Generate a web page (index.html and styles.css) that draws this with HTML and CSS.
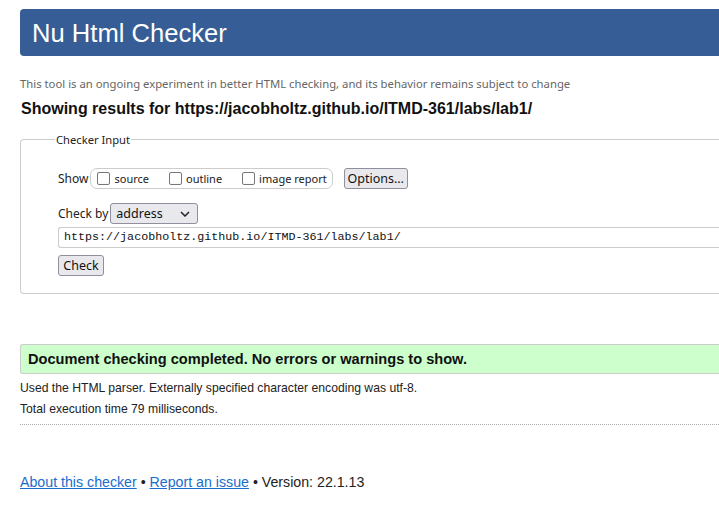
FILE: index.html
```html
<!DOCTYPE html>
<html lang="en">
<head>
<meta charset="utf-8">
<title>Nu Html Checker</title>
<link rel="stylesheet" href="styles.css">
</head>
<body>
<div class="page">
  <h1 class="banner">Nu Html Checker</h1>
  <p class="tagline">This tool is an ongoing experiment in better HTML checking, and its behavior remains subject to change</p>
  <h2 class="showing">Showing results for https://jacobholtz.github.io/ITMD-361/labs/lab1/</h2>

  <fieldset class="input-box">
    <legend class="legend">Checker Input</legend>
    <div class="row show-row">
      <span class="lbl">Show</span>
      <span class="pill">
        <label class="opt"><span class="cb"></span>source</label>
        <label class="opt"><span class="cb"></span>outline</label>
        <label class="opt"><span class="cb"></span>image report</label>
      </span>
      <button class="btn btn-options" type="button">Options...</button>
    </div>
    <div class="row checkby-row">
      <span class="lbl">Check by</span>
      <span class="select">address
        <svg class="chev" width="10" height="6" viewBox="0 0 10 6"><path d="M1 1 L5 5 L9 1" fill="none" stroke="#222" stroke-width="1.5"/></svg>
      </span>
    </div>
    <div class="url">https://jacobholtz.github.io/ITMD-361/labs/lab1/</div>
    <button class="btn btn-check" type="button">Check</button>
  </fieldset>

  <p class="success">Document checking completed. No errors or warnings to show.</p>
  <p class="info first">Used the HTML parser. Externally specified character encoding was utf-8.</p>
  <p class="info">Total execution time 79 milliseconds.</p>
  <hr class="sep">

  <p class="footer"><a href="#">About this checker</a> • <a href="#">Report an issue</a> • Version: 22.1.13</p>
</div>
</body>
</html>
```

FILE: styles.css
```css
html, body {
  margin: 0;
  padding: 0;
  background: #fff;
}
body {
  font-family: "Liberation Sans", Arial, sans-serif;
  color: #222;
}
.page {
  margin-left: 20px;
  padding-top: 9px;
}
.banner {
  margin: 0;
  height: 47px;
  box-sizing: border-box;
  background: #365d95;
  color: #fff;
  font-weight: normal;
  font-size: 25.6px;
  line-height: 48px;
  padding-left: 12px;
  border-radius: 4px 0 0 4px;
}
.tagline {
  margin: 20px 0 0 0;
  font-family: "Noto Sans", "Open Sans", sans-serif;
  font-size: 11.3px;
  line-height: 16px;
  color: #666;
}
.showing {
  margin: 7px 0 0 1px;
  font-size: 16px;
  font-weight: bold;
  line-height: 20px;
  color: #111;
}
.input-box {
  margin: 13px 0 0 0;
  border: 1px solid #ccc;
  border-right: none;
  border-radius: 4px 0 0 4px;
  padding: 21px 0 17px 37px;
  font-family: "Noto Sans", "Open Sans", sans-serif;
  font-size: 12px;
  min-width: 0;
}
.legend {
  margin-left: -3px;
  padding: 0 1px;
  font-size: 11.2px;
  color: #222;
}
.row {
  display: flex;
  align-items: center;
}
.lbl {
  font-size: 12px;
  color: #222;
}
.pill {
  display: flex;
  align-items: center;
  gap: 20px;
  margin-left: 2px;
  height: 19px;
  padding: 0 5px 0 6px;
  border: 1px solid #ccc;
  border-radius: 7px;
}
.opt {
  display: flex;
  align-items: center;
  font-size: 11px;
  color: #222;
}
.cb {
  width: 11px;
  height: 11px;
  border: 1px solid #767676;
  border-radius: 2px;
  margin-right: 4px;
  background: #fff;
}
.btn {
  font-family: "Noto Sans", "Open Sans", sans-serif;
  font-size: 12.5px;
  color: #111;
  background: #e9e9ed;
  border: 1px solid #8f8f9d;
  border-radius: 3px;
  padding: 0;
  height: 21px;
  line-height: 19px;
}
.btn-options {
  margin-left: 11px;
  width: 64px;
}
.checkby-row {
  margin-top: 14px;
}
.select {
  display: flex;
  align-items: center;
  justify-content: space-between;
  margin-left: 2px;
  width: 88px;
  height: 21px;
  box-sizing: border-box;
  padding: 0 7px 0 5px;
  background: #e9e9ed;
  border: 1px solid #8f8f9d;
  border-radius: 3px;
  font-size: 12.5px;
  color: #111;
}
.chev {
  display: block;
}
.url {
  margin-top: 3px;
  height: 21px;
  box-sizing: border-box;
  border: 1px solid #ccc;
  border-right: none;
  border-radius: 3px 0 0 3px;
  padding-left: 5px;
  font-family: "Liberation Mono", "DejaVu Sans Mono", monospace;
  font-size: 11.7px;
  line-height: 19px;
  color: #111;
}
.btn-check {
  display: block;
  margin-top: 7px;
  width: 46px;
}
.success {
  margin: 50px 0 0 0;
  height: 30px;
  box-sizing: border-box;
  background: #ccffcc;
  border: 1px solid #ccc;
  border-right: none;
  border-radius: 3px 0 0 3px;
  padding-left: 7px;
  font-size: 14.6px;
  font-weight: bold;
  line-height: 28px;
  color: #111;
}
.info {
  margin: 0;
  font-size: 12.2px;
  line-height: 21px;
  color: #222;
}
.info.first {
  margin-top: 4px;
}
.sep {
  margin: 4px 0 0 0;
  border: none;
  border-top: 1px dotted #aaa;
  height: 0;
}
.footer {
  margin: 47px 0 0 0;
  font-size: 14.2px;
  line-height: 20px;
  color: #222;
}
.footer a {
  color: #1a6dcc;
  text-decoration: underline;
}
```
